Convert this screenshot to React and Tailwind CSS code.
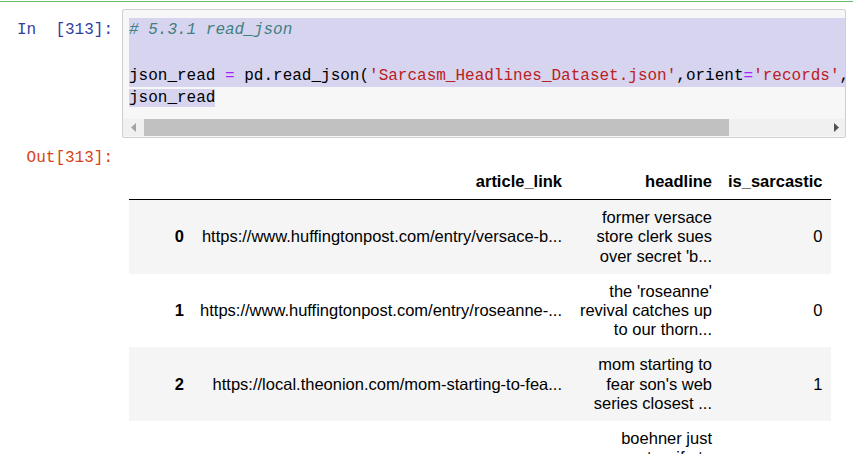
const rows = [
  {
    i: 0,
    link: 'https://www.huffingtonpost.com/entry/versace-b...',
    head: "former versace store clerk sues over secret 'b...",
    s: 0,
  },
  {
    i: 1,
    link: 'https://www.huffingtonpost.com/entry/roseanne-...',
    head: "the 'roseanne' revival catches up to our thorn...",
    s: 0,
  },
  {
    i: 2,
    link: 'https://local.theonion.com/mom-starting-to-fea...',
    head: "mom starting to fear son's web series closest ...",
    s: 1,
  },
  {
    i: 3,
    link: 'https://politics.theonion.com/boehner-just-wan...',
    head: 'boehner just wants wife to listen, not come up wi...',
    s: 1,
  },
]

const mono = { fontFamily: '"Liberation Mono", "DejaVu Sans Mono", monospace' }

function ScrollBar() {
  return (
    <div className="flex h-[17px] bg-[#f0f0f0]">
      <div className="flex w-[21px] items-center justify-center">
        <svg width="5" height="9" viewBox="0 0 5 9">
          <path d="M5 0 L0 4.5 L5 9 Z" fill="#a3a3a3" />
        </svg>
      </div>
      <div className="w-[585px] bg-[#c1c1c1]" />
      <div className="flex-1" />
      <div className="flex w-[17px] items-center justify-center">
        <svg width="5" height="9" viewBox="0 0 5 9">
          <path d="M0 0 L5 4.5 L0 9 Z" fill="#505050" />
        </svg>
      </div>
    </div>
  )
}

function CodeCell() {
  return (
    <div className="flex items-start pt-[7px]">
      <div
        className="w-[122px] shrink-0 whitespace-pre pr-[9px] pt-[10px] text-right text-[16px] leading-[23px] text-[#303f9f]"
        style={mono}
      >
        {'In  [313]:'}
      </div>
      <div className="mr-[7px] flex-1 overflow-hidden rounded-[2px] border border-[#cfcfcf] bg-[#f7f7f7]">
        <div className="overflow-hidden pb-[9px] pl-[6px] pt-[8px]">
          <div className="w-[1400px] whitespace-pre text-[16px] leading-[23px] text-black" style={mono}>
            <div className="bg-[#d7d4f0] pt-[2px] leading-[21px] italic text-[#408080]"># 5.3.1 read_json</div>
            <div className="bg-[#d7d4f0]">{' '}</div>
            <div className="bg-[#d7d4f0] pt-[1px] leading-[22px]">
              json_read <span className="text-[#aa22ff]">=</span> pd.read_json(
              <span className="text-[#ba2121]">'Sarcasm_Headlines_Dataset.json'</span>,orient
              <span className="text-[#aa22ff]">=</span>
              <span className="text-[#ba2121]">'records'</span>,encoding
              <span className="text-[#aa22ff]">=</span>
              <span className="text-[#ba2121]">'utf-8'</span>,lines
              <span className="font-bold text-[#008000]">=True</span>)
            </div>
            <div>
              <span className="bg-[#d7d4f0]">json_read</span>
            </div>
          </div>
        </div>
        <ScrollBar />
        <div className="h-[1px]" />
      </div>
    </div>
  )
}

function OutputCell() {
  const cell = 'px-2 py-2 text-right align-middle'
  return (
    <div className="mt-[9px] flex items-start">
      <div
        className="w-[122px] shrink-0 pr-[9px] text-right text-[16px] leading-[23px] text-[#d84315]"
        style={mono}
      >
        Out[313]:
      </div>
      <div className="pl-[7px] pt-[17px]">
        <table
          className="table-fixed border-collapse text-[16.5px] leading-[19.2px] text-black"
          style={{ fontFamily: '"Liberation Sans", Arial, sans-serif' }}
        >
          <colgroup>
            <col className="w-[63px]" />
            <col className="w-[378px]" />
            <col className="w-[150px]" />
            <col className="w-[110px]" />
          </colgroup>
          <thead>
            <tr className="border-b border-black">
              <th className={cell}></th>
              <th className={cell + ' font-bold'}>article_link</th>
              <th className={cell + ' font-bold'}>headline</th>
              <th className={cell + ' font-bold'}>is_sarcastic</th>
            </tr>
          </thead>
          <tbody>
            {rows.map((r) => (
              <tr key={r.i} className={r.i % 2 === 0 ? 'bg-[#f5f5f5]' : 'bg-white'}>
                <th className={cell + ' font-bold'}>{r.i}</th>
                <td className={cell + ' whitespace-nowrap'}>{r.link}</td>
                <td className={cell}>{r.head}</td>
                <td className={cell}>{r.s}</td>
              </tr>
            ))}
          </tbody>
        </table>
      </div>
    </div>
  )
}

export default function App() {
  return (
    <div className="h-[454px] w-[853px] overflow-hidden bg-white">
      <div className="mt-px h-px bg-[#66bb6a]" />
      <CodeCell />
      <OutputCell />
    </div>
  )
}
